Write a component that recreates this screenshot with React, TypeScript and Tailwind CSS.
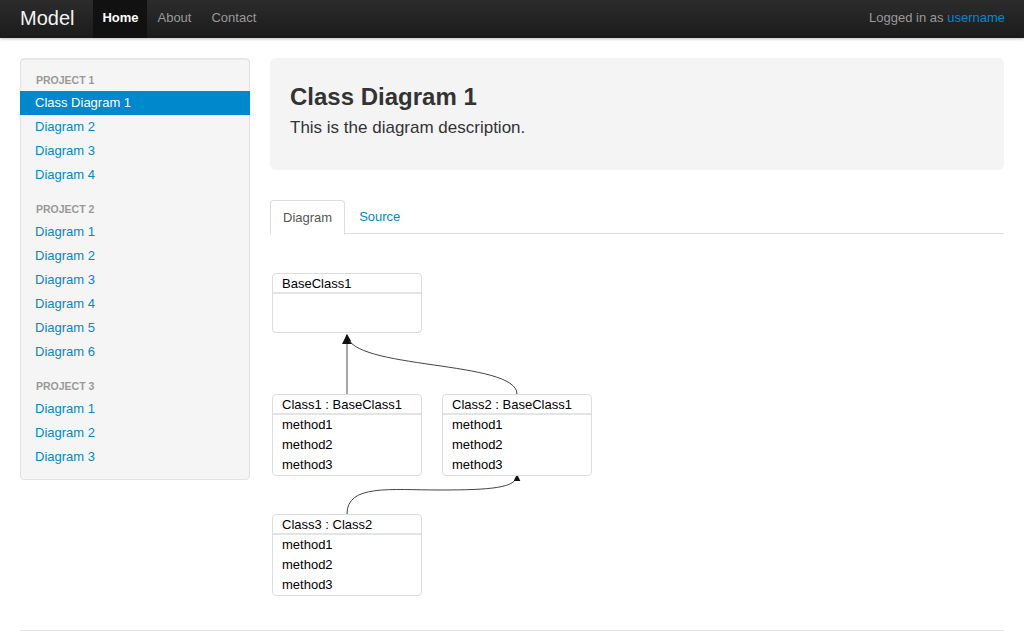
import React from 'react';

const font = { fontFamily: '"Liberation Sans", Arial, Helvetica, sans-serif' };

const projects = [
  { name: 'Project 1', items: ['Class Diagram 1', 'Diagram 2', 'Diagram 3', 'Diagram 4'] },
  { name: 'Project 2', items: ['Diagram 1', 'Diagram 2', 'Diagram 3', 'Diagram 4', 'Diagram 5', 'Diagram 6'] },
  { name: 'Project 3', items: ['Diagram 1', 'Diagram 2', 'Diagram 3'] },
];

interface ClassBoxProps {
  title: string;
  methods: string[];
  className: string;
}

function ClassBox({ title, methods, className }: ClassBoxProps) {
  return (
    <div className={`absolute w-[150px] rounded-[4px] border border-[#dcdcdc] bg-white text-[13px] text-black ${className}`}>
      <div className="h-[20px] border-b-2 border-[#e4e4e4] pl-[9px] leading-[19px]">{title}</div>
      {methods.length === 0 ? (
        <div className="h-[38px]" />
      ) : (
        <div>
          {methods.map((m) => (
            <div key={m} className="h-[20px] pl-[9px] leading-[20px]">
              {m}
            </div>
          ))}
        </div>
      )}
    </div>
  );
}

export default function App() {
  return (
    <div className="min-h-[635px] bg-white text-[14px] text-[#333]" style={font}>
      {/* Navbar */}
      <div className="flex h-[38px] items-stretch bg-gradient-to-b from-[#2c2c2c] to-[#1b1b1b] text-[13px] shadow-[0_1px_3px_rgba(0,0,0,0.25)]">
        <div className="flex items-center pb-[3px] pl-[20px] pr-[19px] text-[20px] text-[#f2f2f2]">Model</div>
        <div className="flex items-stretch">
          <div className="flex w-[54px] items-center justify-center bg-[#111] pb-[3px] font-bold text-white">Home</div>
          <div className="flex items-center pb-[3px] pl-[10px] pr-[10px] text-[#999]">About</div>
          <div className="flex items-center pb-[3px] pl-[10px] text-[#999]">Contact</div>
        </div>
        <div className="ml-auto flex items-center pb-[3px] pr-[19px] text-[#999]">
          Logged in as&nbsp;<span className="text-[#0088cc]">username</span>
        </div>
      </div>

      <div className="flex gap-[20px] px-[20px] pt-[20px]">
        {/* Sidebar */}
        <div className="w-[230px] shrink-0 self-start rounded-[4px] border border-[#e3e3e3] bg-[#f5f5f5] pt-[10px] pb-[10px] shadow-[inset_0_1px_1px_rgba(0,0,0,0.05)]">
          {projects.map((p, pi) => (
            <div key={p.name} className={pi > 0 ? 'mt-[11px]' : ''}>
              <div className="h-[22px] px-[15px] text-[10.5px] font-bold uppercase leading-[22px] text-[#999]">{p.name}</div>
              {p.items.map((item, ii) => {
                const active = pi === 0 && ii === 0;
                return (
                  <div
                    key={item + ii}
                    className={`-mx-px h-[24px] px-[15px] text-[13px] leading-[24px] ${active ? 'bg-[#0088cc] text-white' : 'text-[#0088cc]'}`}
                  >
                    {item}
                  </div>
                );
              })}
            </div>
          ))}
        </div>

        {/* Main */}
        <div className="flex-1">
          <div className="h-[112px] rounded-[6px] bg-[#f4f4f4] px-[20px] pt-[24px]">
            <h1 className="text-[24px] font-bold leading-[30px] text-[#333]">Class Diagram 1</h1>
            <p className="mt-[4px] text-[17px] leading-[24px] text-[#333]">This is the diagram description.</p>
          </div>

          <div className="mt-[30px] flex h-[34px] border-b border-[#ddd]">
            <div className="-mb-px flex h-[35px] items-center rounded-t-[4px] border border-[#ddd] border-b-white bg-white px-[12px] text-[13px] text-[#555]">
              Diagram
            </div>
            <div className="ml-[2px] flex items-center px-[12px] text-[13px] text-[#0088cc]">Source</div>
          </div>

          {/* Diagram canvas */}
          <div className="relative h-[386px]">
            <svg className="absolute inset-0" width="734" height="386">
              <defs>
                <marker id="arrow" viewBox="0 0 10 10" refX="9" refY="5" markerWidth="7" markerHeight="7" orient="auto">
                  <path d="M0 0 L10 5 L0 10 z" fill="#111" />
                </marker>
              </defs>
              <path d="M77 160 L77 101" stroke="#8a8a8a" strokeWidth="1.5" fill="none" markerEnd="url(#arrow)" />
              <path d="M247 160 C247 126 80 136 77 101" stroke="#444" strokeWidth="1" fill="none" markerEnd="url(#arrow)" />
              <path d="M77 280 C77 250 120 256 170 256 C220 256 247 254 247 241" stroke="#444" strokeWidth="1" fill="none" markerEnd="url(#arrow)" />
            </svg>
            <ClassBox title="BaseClass1" methods={[]} className="left-[2px] top-[39px]" />
            <ClassBox title="Class1 : BaseClass1" methods={['method1', 'method2', 'method3']} className="left-[2px] top-[160px]" />
            <ClassBox title="Class2 : BaseClass1" methods={['method1', 'method2', 'method3']} className="left-[172px] top-[160px]" />
            <ClassBox title="Class3 : Class2" methods={['method1', 'method2', 'method3']} className="left-[2px] top-[280px]" />
          </div>
        </div>
      </div>

      <div className="mx-[20px] mt-[10px] border-t border-[#e5e5e5]" />
    </div>
  );
}
